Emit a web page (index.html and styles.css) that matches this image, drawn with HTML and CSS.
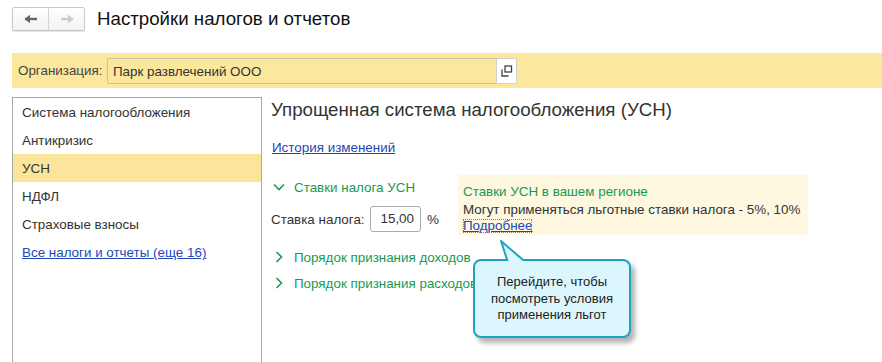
FILE: index.html
```html
<!DOCTYPE html>
<html lang="ru">
<head>
<meta charset="utf-8">
<link rel="stylesheet" href="styles.css">
</head>
<body>
<header class="top">
  <div class="nav">
    <button class="nav-btn"><svg width="14" height="10" viewBox="0 0 14 10"><path d="M1 5h12" stroke="#666" stroke-width="2.4"/><path d="M0.5 5L6 0.8V9.2Z" fill="#666"/></svg></button>
    <button class="nav-btn"><svg width="14" height="10" viewBox="0 0 14 10"><path d="M1 5h12" stroke="#ccc" stroke-width="2.4"/><path d="M13.5 5L8 0.8V9.2Z" fill="#ccc"/></svg></button>
  </div>
  <h1 class="title">Настройки налогов и отчетов</h1>
</header>

<div class="orgbar">
  <span class="org-label">Организация:</span>
  <div class="org-input">
    <span class="org-value">Парк развлечений ООО</span>
    <span class="org-open"><svg width="12" height="12" viewBox="0 0 12 12"><path d="M1 4.5V11H7.5" fill="none" stroke="#444" stroke-width="1.3"/><rect x="4" y="1" width="6.5" height="6" fill="none" stroke="#444" stroke-width="1.3"/></svg></span>
  </div>
</div>

<div class="main">
  <nav class="side">
    <div class="side-item">Система налогообложения</div>
    <div class="side-item">Антикризис</div>
    <div class="side-item active">УСН</div>
    <div class="side-item">НДФЛ</div>
    <div class="side-item">Страховые взносы</div>
    <div class="side-item"><a class="link" href="#">Все налоги и отчеты (еще 16)</a></div>
  </nav>

  <section class="content">
    <h2 class="heading">Упрощенная система налогообложения (УСН)</h2>
    <a class="link history" href="#">История изменений</a>

    <div class="rates">
      <div class="rates-left">
        <div class="group"><svg class="chev" width="12" height="12" viewBox="0 0 12 12"><path d="M1 3.5l5 5 5-5" fill="none" stroke="#169c52" stroke-width="1.6"/></svg>Ставки налога УСН</div>
        <div class="rate-row">
          <span class="rate-label">Ставка налога:</span>
          <span class="rate-input">15,00</span>
          <span class="pct">%</span>
        </div>
      </div>
      <div class="info">
        <div class="info-title">Ставки УСН в вашем регионе</div>
        <div class="info-text">Могут применяться льготные ставки налога - 5%, 10%</div>
        <a class="link more" href="#">Подробнее</a>
      </div>
    </div>

    <div class="group group-first"><svg class="chev" width="12" height="12" viewBox="0 0 12 12"><path d="M3.5 1l5 5-5 5" fill="none" stroke="#169c52" stroke-width="1.6"/></svg>Порядок признания доходов</div>
    <div class="group"><svg class="chev" width="12" height="12" viewBox="0 0 12 12"><path d="M3.5 1l5 5-5 5" fill="none" stroke="#169c52" stroke-width="1.6"/></svg>Порядок признания расходов</div>

    <div class="callout">
      <svg class="callout-tail" width="30" height="23" viewBox="0 0 30 23"><path d="M8 22.5L1 1 L26 22.5" fill="#dbf7fd" stroke="#1ea3bd" stroke-width="2" stroke-linejoin="round"/><rect x="0" y="21" width="30" height="2" fill="#dbf7fd"/></svg>
      Перейдите, чтобы посмотреть условия применения льгот
    </div>
  </section>
</div>
</body>
</html>
```

FILE: styles.css
```css
* { box-sizing: border-box; }
body {
  margin: 0;
  font-family: "Liberation Sans", Arial, sans-serif;
  font-size: 13.4px;
  color: #333;
  background: #fff;
  width: 882px;
  height: 362px;
  overflow: hidden;
}
.top {
  display: flex;
  align-items: center;
  padding: 7px 12px 0 12px;
  height: 31px;
}
.nav {
  display: flex;
  width: 73px;
  height: 24px;
  border: 1px solid #c8c8c8;
  border-radius: 2px;
  background: linear-gradient(#fff, #f2f2f2);
  box-shadow: 0 1px 1px rgba(0,0,0,0.12);
}
.nav-btn {
  flex: 1;
  border: 0;
  background: transparent;
  padding: 0;
  display: flex;
  align-items: center;
  justify-content: center;
}
.nav-btn + .nav-btn { border-left: 1px solid #d4d4d4; }
.title {
  margin: 0 0 0 12px;
  font-size: 18.7px;
  font-weight: normal;
  color: #111;
}
.orgbar {
  margin: 22px 0 0 12px;
  height: 35px;
  background: #fbe89d;
  display: flex;
  align-items: center;
  padding-left: 6px;
}
.org-label {
  color: #444;
  width: 89px;
}
.org-input {
  width: 410px;
  height: 26px;
  margin-top: 1px;
  border: 1px solid #c9c2a0;
  border-radius: 2px;
  display: flex;
  align-items: center;
}
.org-value { flex: 1; padding-left: 5px; color: #333; }
.org-open {
  width: 21px;
  height: 26px;
  margin-right: -1px;
  background: #fff;
  border: 1px solid #d0d0d0;
  border-radius: 0 2px 2px 0;
  display: flex;
  align-items: center;
  justify-content: center;
}
.main {
  display: flex;
  margin: 9px 0 0 12px;
}
.side {
  width: 250px;
  height: 280px;
  border: 1px solid #a8a8a8;
  border-bottom: 0;
}
.side-item {
  height: 28px;
  line-height: 26px;
  padding: 2px 0 0 9px;
  color: #333;
}
.side-item.active { background: #fbe59a; }
.link { color: #2147b7; text-decoration: underline; }
.content {
  position: relative;
  flex: 1;
  padding-left: 9px;
}
.heading {
  margin: 0;
  font-size: 18.7px;
  font-weight: normal;
  color: #333;
  line-height: 22px;
  padding-top: 2px;
}
.history {
  display: inline-block;
  margin-top: 19px;
  margin-left: 1px;
}
.rates {
  display: flex;
  margin-top: 19px;
}
.rates-left { width: 187px; }
.group {
  color: #179a52;
  display: flex;
  align-items: center;
  height: 26px;
  padding-left: 2px;
}
.chev { margin-right: 9px; }
.rate-row {
  display: flex;
  align-items: center;
  margin-top: 6px;
}
.rate-label { width: 99px; }
.rate-input {
  width: 51px;
  height: 26px;
  border: 1px solid #aaa;
  border-radius: 3px;
  text-align: right;
  padding-right: 6px;
  line-height: 24px;
}
.pct { margin-left: 6px; }
.info {
  background: #fdf8df;
  width: 350px;
  height: 60px;
  margin-top: 1px;
  padding: 8px 5px 0 5px;
}
.info-title { color: #179a52; line-height: 17px; }
.info-text { margin-top: 2px; line-height: 16px; color: #333; }
.more { line-height: 14px; display: inline-block; margin-top: -3px; outline: 1px dotted #6a7fcf; outline-offset: -1px; }
.group-first { margin-top: 9px; }
.callout {
  position: absolute;
  left: 211px;
  top: 162px;
  width: 158px;
  height: 79px;
  background: #dbf7fd;
  border: 2px solid #1ea3bd;
  border-radius: 8px;
  box-shadow: 4px 5px 5px rgba(0,0,0,0.3);
  color: #222;
  text-align: center;
  font-size: 13px;
  line-height: 16.5px;
  padding: 13px 12px 0;
}
.callout-tail {
  position: absolute;
  left: 25px;
  top: -21px;
}
```
